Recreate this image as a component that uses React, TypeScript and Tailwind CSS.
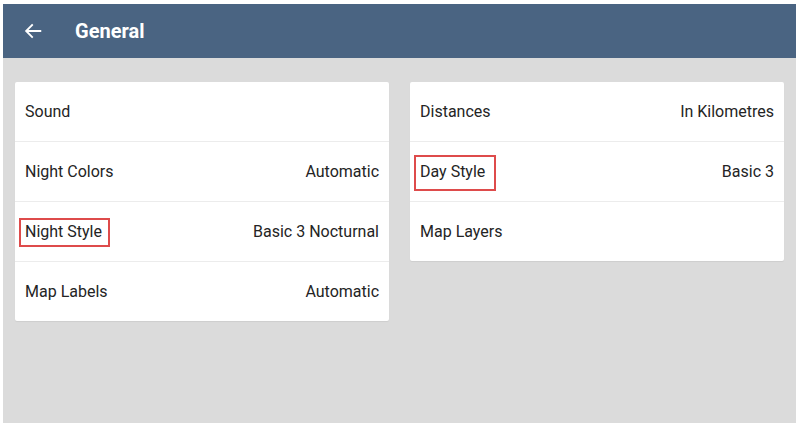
import type { ReactNode } from 'react'

type Row = {
	label: string
	value?: string
	mark?: string
}

const leftRows: Row[] = [
	{ label: 'Sound' },
	{ label: 'Night Colors', value: 'Automatic' },
	{ label: 'Night Style', value: 'Basic 3 Nocturnal', mark: 'night' },
	{ label: 'Map Labels', value: 'Automatic' },
]

const rightRows: Row[] = [
	{ label: 'Distances', value: 'In Kilometres' },
	{ label: 'Day Style', value: 'Basic 3', mark: 'day' },
	{ label: 'Map Layers' },
]

function Marked({ kind, children }: { kind?: string; children: ReactNode }) {
	if (!kind) return <span>{children}</span>
	return (
		<span className="relative">
			{children}
			{kind === 'night' ? (
				<span className="absolute -left-[6px] -right-[8px] -top-[2px] -bottom-[3px] border-2 border-[#de4b4b]" />
			) : (
				<span className="absolute -left-[6px] -right-[11px] -top-[5px] -bottom-[7px] border-2 border-[#de4b4b]" />
			)}
		</span>
	)
}

function SettingsCard({ rows }: { rows: Row[] }) {
	return (
		<div className="w-[374px] bg-white rounded-[2px] shadow-[0_1px_1px_rgba(0,0,0,0.06)]">
			{rows.map((row, i) => (
				<div
					key={row.label}
					className={`flex items-center justify-between px-[10px] pt-[1px] text-[16px] leading-6 text-[#242424] ${
						i > 0 ? 'h-[60px] border-t border-[#ececec]' : 'h-[59px]'
					}`}
				>
					<Marked kind={row.mark}>{row.label}</Marked>
					{row.value && <span>{row.value}</span>}
				</div>
			))}
		</div>
	)
}

export default function App() {
	return (
		<div
			className="w-[797px] h-[423px] bg-white pt-[4px] pl-[3px] pr-[1px]"
			style={{ fontFamily: 'Roboto, "Noto Sans", sans-serif' }}
		>
			<div className="h-full flex flex-col bg-[#dbdbdb]">
				<div className="h-[54px] shrink-0 bg-[#4a6482] flex items-center">
					<svg
						className="ml-[19px]"
						width="22"
						height="22"
						viewBox="0 0 24 24"
						fill="none"
						stroke="white"
						strokeWidth="2"
						strokeLinecap="square"
					>
						<path d="M20 12H5M11 5.5L4.5 12L11 18.5" />
					</svg>
					<span className="ml-[31px] text-[20px] font-bold text-white">General</span>
				</div>
				<div className="flex items-start gap-[21px] pt-[24px] pl-[12px]">
					<SettingsCard rows={leftRows} />
					<SettingsCard rows={rightRows} />
				</div>
			</div>
		</div>
	)
}
